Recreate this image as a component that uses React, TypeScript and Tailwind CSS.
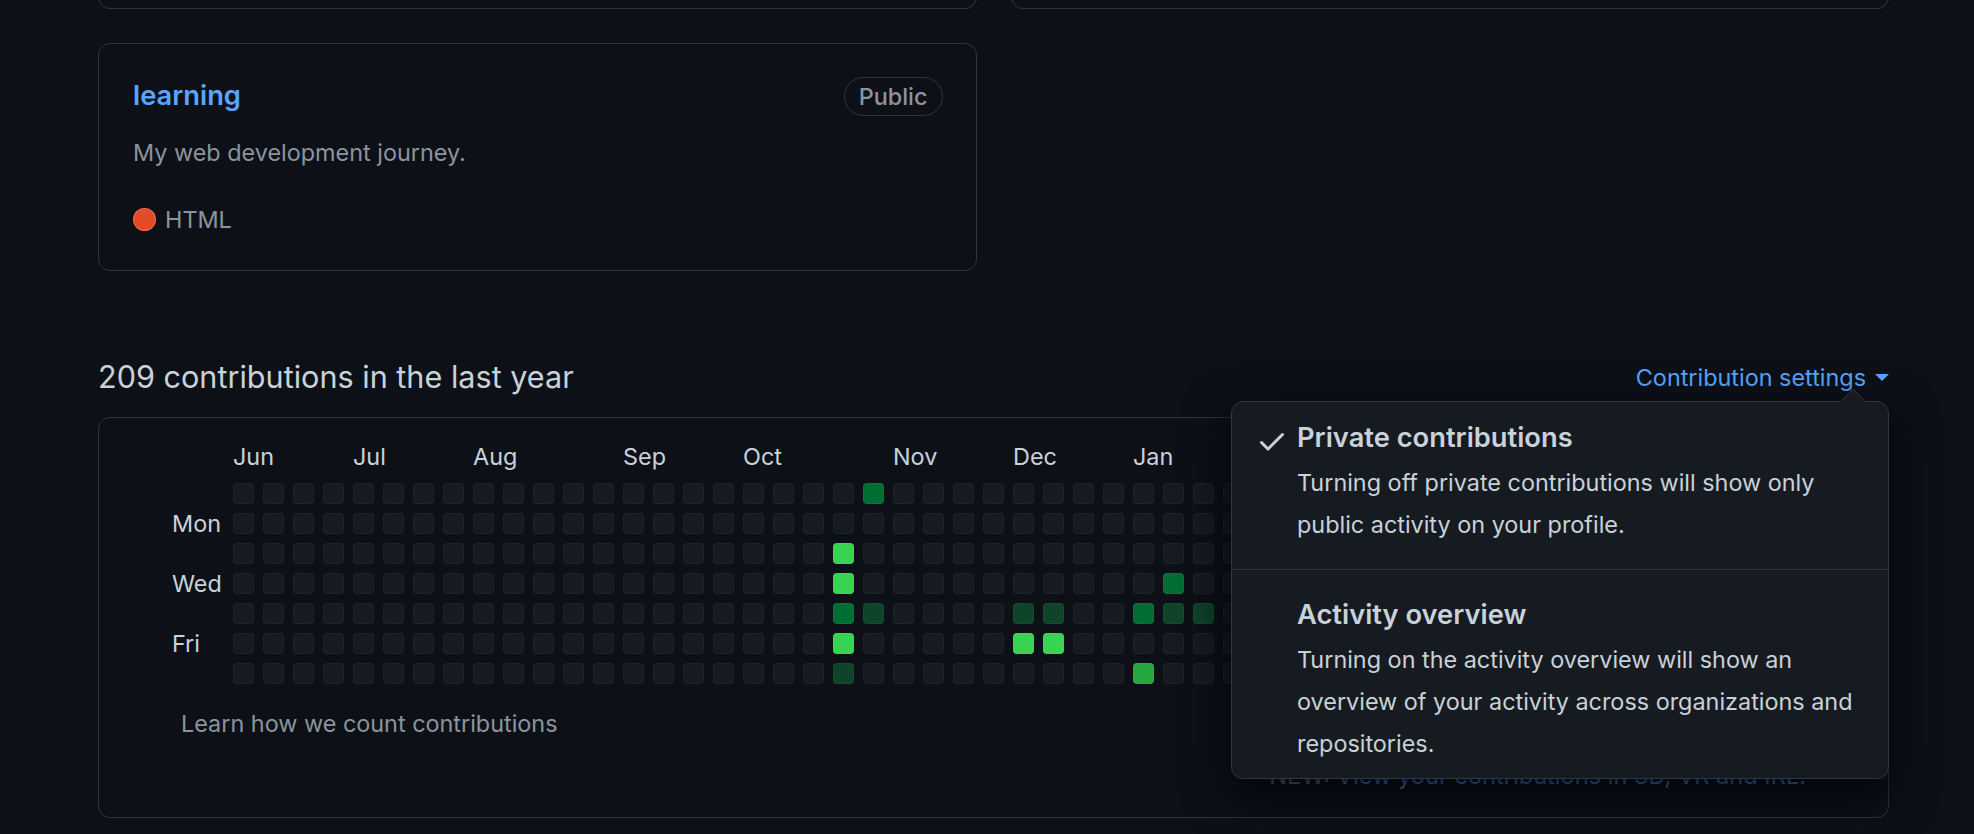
import React from "react";

const LEVELS = [
  "bg-[#161b22]",
  "bg-[#0e4429]",
  "bg-[#006d32]",
  "bg-[#26a641]",
  "bg-[#39d353]",
];

// week-day -> level for the few days that have contributions
const ACTIVE: Record<string, number> = {
  "20-2": 4,
  "20-3": 4,
  "20-4": 2,
  "20-5": 4,
  "20-6": 1,
  "21-0": 2,
  "21-4": 1,
  "26-4": 1,
  "27-4": 1,
  "26-5": 4,
  "27-5": 4,
  "30-4": 2,
  "30-6": 3,
  "31-3": 2,
  "31-4": 1,
  "32-4": 1,
};

// months after Jan sit under the settings menu
const MONTHS: [string, number][] = [
  ["Jun", 0],
  ["Jul", 4],
  ["Aug", 8],
  ["Sep", 13],
  ["Oct", 17],
  ["Nov", 22],
  ["Dec", 26],
  ["Jan", 30],
];

const WEEKS = 53;
const DAYS = ["", "Mon", "", "Wed", "", "Fri", ""];

function CheckIcon() {
  return (
    <svg width="32" height="32" viewBox="0 0 16 16" fill="currentColor">
      <path d="M13.78 4.22a.75.75 0 0 1 0 1.06l-7.25 7.25a.75.75 0 0 1-1.06 0L2.22 9.28a.751.751 0 0 1 .018-1.042.751.751 0 0 1 1.042-.018L6 10.94l6.72-6.72a.75.75 0 0 1 1.06 0Z" />
    </svg>
  );
}

function Calendar() {
  const cells = [];
  for (let w = 0; w < WEEKS; w++) {
    for (let d = 0; d < 7; d++) {
      const level = ACTIVE[`${w}-${d}`] ?? 0;
      cells.push(
        <div
          key={`${w}-${d}`}
          className={`h-[21px] w-[21px] rounded-[4px] outline outline-1 -outline-offset-1 outline-white/[0.04] ${LEVELS[level]}`}
        />
      );
    }
  }

  return (
    <div className="mt-[16px] rounded-[12px] border border-[#30363d] pb-[26px] pl-[73px] pt-[24px]">
      {/* Month labels */}
      <div className="mb-[11px] ml-[61px] grid h-[30px] grid-cols-[repeat(53,21px)] gap-x-[9px] text-[23.4px] leading-[30px] text-[#c9d1d9]">
        {MONTHS.map(([name, col]) => (
          <span
            key={name}
            className="whitespace-nowrap"
            style={{ gridColumnStart: col + 1 }}
          >
            {name}
          </span>
        ))}
      </div>

      <div className="flex">
        <div className="grid w-[61px] shrink-0 grid-rows-[repeat(7,21px)] gap-y-[9px] text-[23.4px] leading-[21px] text-[#c9d1d9]">
          {DAYS.map((d, i) => (
            <span key={i}>{d}</span>
          ))}
        </div>
        <div className="grid auto-cols-[21px] grid-flow-col grid-rows-[repeat(7,21px)] gap-[9px]">
          {cells}
        </div>
      </div>

      {/* Footer */}
      <div className="mt-[25px] flex h-[30px] items-center text-[23.4px] leading-[30px] text-[#8b949e]">
        <a className="ml-[9px]">Learn how we count contributions</a>
      </div>
      <div className="mt-[22px] flex h-[30px] justify-end pr-[82px] text-[23.6px] leading-[30px]">
        <span className="text-[#8b949e]">NEW:&nbsp;</span>
        <a className="text-[#58a6ff]">View your contributions in 3D, VR and IRL!</a>
      </div>
    </div>
  );
}

function SettingsMenu() {
  return (
    <div className="absolute right-0 top-[48px] z-10 w-[658px] rounded-[12px] border border-[#30363d] bg-[#161b22] shadow-[0_16px_48px_#010409]">
      <span className="absolute -top-[10px] right-[26px] h-[18px] w-[18px] rotate-45 rounded-tl-[2px] border-l border-t border-[#30363d] bg-[#161b22]" />

      <div className="relative flex pb-[23px] pl-[24px] pt-[18px]">
        <div className="mt-[5px] w-[32px] shrink-0 text-[#c9d1d9]">
          <CheckIcon />
        </div>
        <div className="ml-[9px]">
          <div className="text-[27.3px] font-semibold leading-[36px] text-[#c9d1d9]">
            Private contributions
          </div>
          <p className="mt-[6px] whitespace-nowrap text-[23.4px] leading-[42px] text-[#c9d1d9]">
            Turning off private contributions will show only
            <br />
            public activity on your profile.
          </p>
        </div>
      </div>

      <div className="h-px bg-[#30363d]" />

      <div className="flex pb-[13px] pl-[24px] pt-[27px]">
        <div className="w-[32px] shrink-0" />
        <div className="ml-[9px]">
          <div className="text-[27.3px] font-semibold leading-[36px] text-[#c9d1d9]">
            Activity overview
          </div>
          <p className="mt-[6px] whitespace-nowrap text-[23.4px] leading-[42px] text-[#c9d1d9]">
            Turning on the activity overview will show an
            <br />
            overview of your activity across organizations and
            <br />
            repositories.
          </p>
        </div>
      </div>
    </div>
  );
}

export default function App() {
  return (
    <div className="min-h-screen overflow-hidden bg-[#0d1117] pl-[98px] pr-[85px] font-['Inter','Noto_Sans',sans-serif]">
      {/* Pinned repositories */}
      <div className="-mt-[219px] grid grid-cols-2 gap-[34px]">
        <div className="h-[228px] rounded-[12px] border border-[#30363d]" />
        <div className="h-[228px] rounded-[12px] border border-[#30363d]" />

        <div className="h-[228px] rounded-[12px] border border-[#30363d] pl-[34px] pr-[33px] pt-[32px]">
          <div className="flex h-[41px] items-center justify-between">
            <a className="text-[27.3px] font-semibold text-[#58a6ff]">learning</a>
            <span className="rounded-full border border-[#30363d] px-[14px] text-[23.4px] font-medium leading-[37px] text-[#8b949e]">
              Public
            </span>
          </div>
          <p className="mt-[18px] text-[23.4px] leading-[35px] text-[#8b949e]">
            My web development journey.
          </p>
          <div className="mt-[32px] flex items-center gap-[9px] text-[23.4px] leading-[35px] text-[#8b949e]">
            <span className="h-[23px] w-[23px] rounded-full border border-white/20 bg-[#e34c26]" />
            HTML
          </div>
        </div>
      </div>

      {/* Contributions */}
      <div className="relative mt-[82px] flex h-[48px] items-center justify-between">
        <h2 className="text-[30.6px] font-normal leading-[48px] text-[#c9d1d9]">
          209 contributions in the last year
        </h2>
        <button className="flex items-center gap-[9px] text-[23.4px] leading-[35px] text-[#58a6ff]">
          Contribution settings
          <span className="h-0 w-0 border-x-[7px] border-t-[7px] border-x-transparent border-t-[#58a6ff]" />
        </button>
        <SettingsMenu />
      </div>

      <Calendar />
    </div>
  );
}
